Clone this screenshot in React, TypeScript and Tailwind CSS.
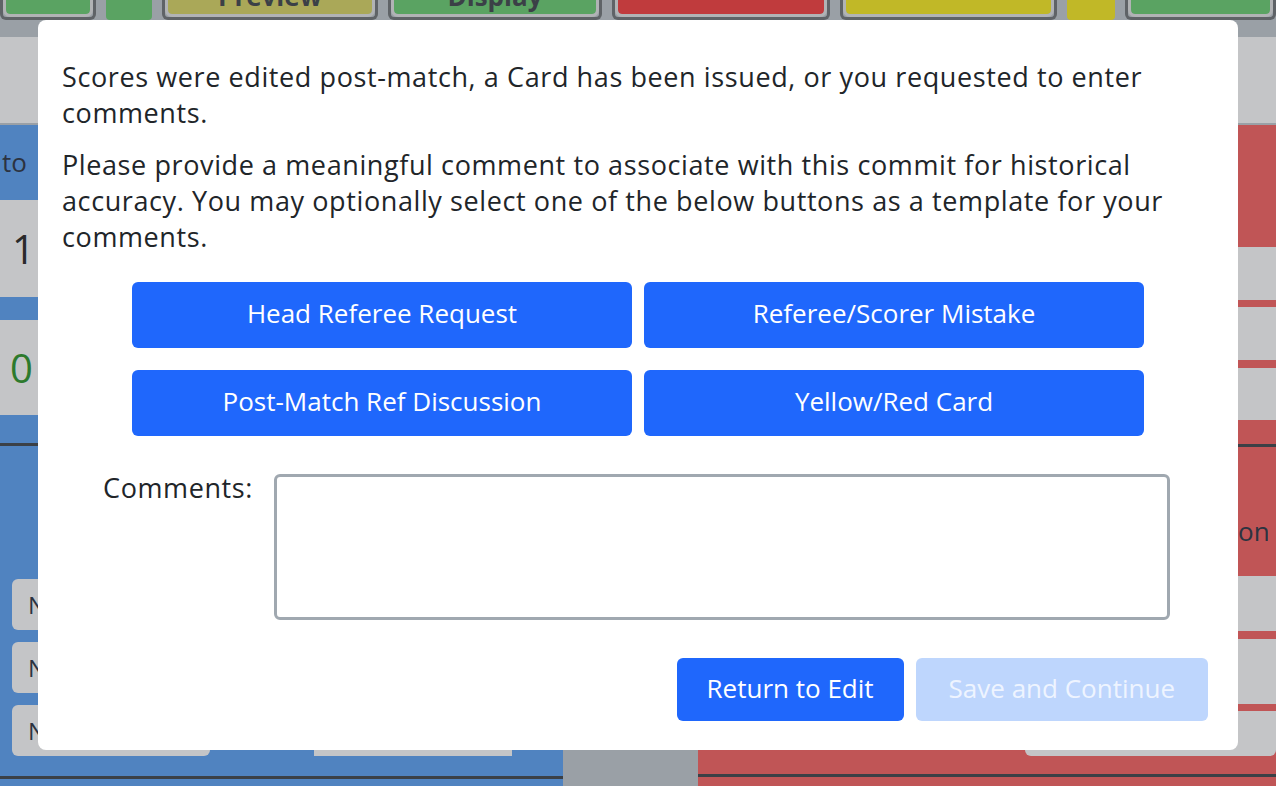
import { useState } from 'react';

const TEMPLATES = [
  'Head Referee Request',
  'Referee/Scorer Mistake',
  'Post-Match Ref Discussion',
  'Yellow/Red Card',
];

const TOP_BUTTONS = [
  { w: 'w-[96px]', color: 'bg-[#5aa362]', label: '' },
  { w: 'w-[46px]', color: 'bg-[#5aa362]', label: '', plain: true },
  { w: 'w-[216px]', color: 'bg-[#aaa858]', label: 'Preview' },
  { w: 'w-[214px]', color: 'bg-[#5aa362]', label: 'Display' },
  { w: 'w-[218px]', color: 'bg-[#c03b3d]', label: '' },
  { w: 'w-[217px]', color: 'bg-[#c1b827]', label: '' },
  { w: 'w-[48px]', color: 'bg-[#c1b827]', label: '', plain: true },
  { w: 'flex-1', color: 'bg-[#5aa362]', label: '' },
];

function Backdrop() {
  return (
    <div className="flex h-[786px] w-[1276px] flex-col overflow-hidden bg-[#9aa0a6]">
      {/* top bar, cut off by the window */}
      <div className="flex h-[20px] items-end gap-[10px] overflow-hidden">
        {TOP_BUTTONS.map((b, i) => (
          <div
            key={i}
            className={`${b.w} h-[60px] shrink-0 rounded-b-md ${
              b.plain ? '' : 'border-[3px] border-t-0 border-[#5f6367] p-[3px] pt-0'
            }`}
          >
            <div
              className={`flex h-full items-end justify-center rounded-b-[4px] ${b.color} ${
                b.plain ? '' : 'outline-[3px] outline-[#b1b3b5]'
              } text-[26px] font-bold leading-[30px] text-[#3b4047]`}
            >
              <span className="translate-y-[-3px]">{b.label}</span>
            </div>
          </div>
        ))}
      </div>

      <div className="h-[17px]" />
      <div className="h-[86px] bg-[#c4c5c7]" />
      <div className="h-[2px]" />

      <div className="flex flex-1">
        {/* blue side */}
        <div className="flex w-[563px] flex-col bg-[#5083c0]">
          <div className="flex h-[75px] items-center px-[2px] text-[26px] text-[#2c3340]">to</div>
          <div className="flex h-[97px] items-center bg-[#c4c5c7] pl-[12px] text-[40px] text-[#2a2a2a]">1</div>
          <div className="h-[23px]" />
          <div className="flex h-[95px] items-center bg-[#c4c5c7] pl-[10px] text-[40px] text-[#2d7a2d]">0</div>
          <div className="h-[28px]" />
          <div className="h-[3px] bg-[#3b4046]" />
          <div className="h-[133px]" />
          <div className="flex flex-col gap-[12px] pl-[12px]">
            <div className="flex h-[51px] w-[198px] items-center rounded-md bg-[#c4c5c7] pl-[16px] text-[24px] text-[#2c3340]">N</div>
            <div className="flex h-[51px] w-[198px] items-center rounded-md bg-[#c4c5c7] pl-[16px] text-[24px] text-[#2c3340]">N</div>
            <div className="flex gap-[104px]">
              <div className="flex h-[51px] w-[198px] items-center rounded-md bg-[#c4c5c7] pl-[16px] text-[24px] text-[#2c3340]">N</div>
              <div className="mt-[24px] h-[27px] w-[198px] rounded-t-md bg-[#c4c5c7]" />
            </div>
          </div>
          <div className="h-[20px]" />
          <div className="h-[3px] bg-[#3b4046]" />
        </div>

        {/* middle */}
        <div className="w-[135px]" />

        {/* red side */}
        <div className="flex flex-1 flex-col bg-[#c05556]">
          <div className="h-[122px]" />
          <div className="h-[53px] bg-[#c4c5c7]" />
          <div className="h-[7px]" />
          <div className="h-[53px] bg-[#c4c5c7]" />
          <div className="h-[8px]" />
          <div className="h-[52px] bg-[#c4c5c7]" />
          <div className="h-[24px]" />
          <div className="h-[3px] bg-[#3b4046]" />
          <div className="flex h-[129px] items-center justify-end pr-[8px] pt-[40px] text-[26px] text-[#2c3340]">
            <span className="w-[30px] overflow-hidden">on</span>
          </div>
          <div className="h-[55px] bg-[#c4c5c7]" />
          <div className="h-[8px]" />
          <div className="h-[65px] bg-[#c4c5c7]" />
          <div className="h-[7px]" />
          <div className="flex h-[45px] justify-end">
            <div className="w-[251px] rounded-b-md bg-[#c4c5c7]" />
          </div>
          <div className="h-[18px]" />
          <div className="h-[3px] bg-[#3b4046]" />
        </div>
      </div>
    </div>
  );
}

export default function App() {
  const [comment, setComment] = useState('');

  return (
    <div className="relative h-[786px] w-[1276px] overflow-hidden font-['Open_Sans',sans-serif]">
      <Backdrop />

      {/* Commit comment dialog */}
      <div className="absolute inset-0 flex justify-center pt-[20px]">
        <div className="h-fit w-[1200px] rounded-lg bg-white pb-[29px] pl-[24px] pr-[30px] pt-[39px] text-[#212529]">
          <p className="text-[27px] leading-[36px] tracking-[0.6px]">
            Scores were edited post-match, a Card has been issued, or you requested to enter comments.
          </p>
          <p className="mt-[16px] text-[27px] leading-[36px] tracking-[0.6px]">
            Please provide a meaningful comment to associate with this commit for historical accuracy. You may
            optionally select one of the below buttons as a template for your comments.
          </p>

          <div className="mt-[27px] grid grid-cols-[500px_500px] justify-center gap-x-[12px] gap-y-[22px] pl-[6px]">
            {TEMPLATES.map((t) => (
              <button
                key={t}
                onClick={() => setComment(t)}
                className="h-[66px] rounded-md bg-[#1f67fc] pb-[4px] text-[26px] text-white"
              >
                {t}
              </button>
            ))}
          </div>

          <div className="mt-[38px] flex items-start">
            <label className="mt-[-4px] w-[191px] text-right text-[27px] leading-[36px] tracking-[0.6px]">
              Comments:
            </label>
            <textarea
              value={comment}
              onChange={(e) => setComment(e.target.value)}
              className="ml-[21px] h-[146px] w-[896px] resize-none rounded-md border-[3px] border-[#a0a8b0] bg-white p-2 text-[26px] outline-none"
            />
          </div>

          <div className="mt-[38px] flex justify-end gap-[12px]">
            <button className="h-[63px] rounded-md bg-[#1f67fc] px-[30px] pb-[2px] text-[26px] text-white">
              Return to Edit
            </button>
            <button
              disabled
              className="h-[63px] rounded-md bg-[#bed6fd] px-[33px] pb-[2px] text-[26px] text-[#eef4ff]"
            >
              Save and Continue
            </button>
          </div>
        </div>
      </div>
    </div>
  );
}
